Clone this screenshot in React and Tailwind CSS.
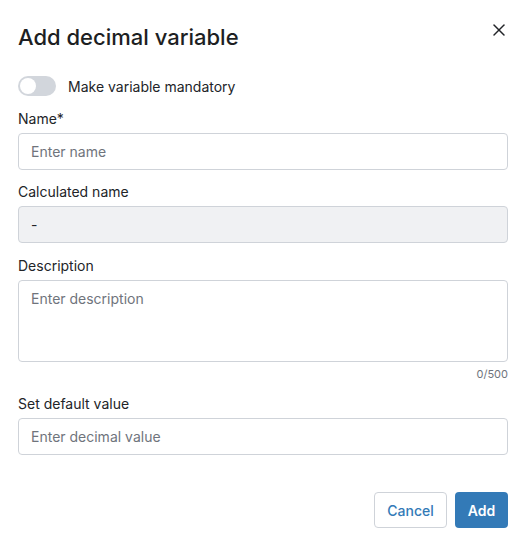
import { X } from 'lucide-react';

const Label = ({ children, className = '' }) => (
  <div className={`text-[14px] leading-[20px] text-[#222428] ${className}`}>{children}</div>
);

const inputBase =
  'w-full h-[37px] rounded-[4px] border border-[#cfd3d9] px-[12px] text-[14px] text-[#222428] placeholder:text-[#6f747c] outline-none';

export default function App() {
  return (
    <div
      className="w-[528px] h-[547px] bg-white pl-[18px] pr-[20px] pt-[23px]"
      style={{ fontFamily: 'Inter, "Noto Sans", sans-serif' }}
    >
      {/* Header */}
      <div className="flex items-start justify-between h-[28px]">
        <h2 className="text-[22px] leading-[28px] font-medium text-[#1d1f23]">Add decimal variable</h2>
        <button className="-mt-[3px] -mr-[1px] text-[#222428]">
          <X size={20} strokeWidth={1.8} />
        </button>
      </div>

      {/* Toggle */}
      <div className="mt-[25px] flex items-center h-[20px]">
        <div className="relative w-[38px] h-[20px] rounded-full bg-[#d2d6dc]">
          <div className="absolute left-[2px] top-[2px] w-[16px] h-[16px] rounded-full bg-white" />
        </div>
        <span className="ml-[12px] text-[14px] text-[#222428]">Make variable mandatory</span>
      </div>

      {/* Name */}
      <Label className="mt-[13px]">Name*</Label>
      <input className={`${inputBase} mt-[4px]`} placeholder="Enter name" />

      {/* Calculated name */}
      <Label className="mt-[12px]">Calculated name</Label>
      <div className="mt-[4px] w-full h-[37px] rounded-[4px] border border-[#cfd3d9] bg-[#f0f1f3] px-[12px] flex items-center text-[14px] text-[#222428]">
        -
      </div>

      {/* Description */}
      <Label className="mt-[13px]">Description</Label>
      <textarea
        className="mt-[4px] block w-full h-[82px] rounded-[4px] border border-[#cfd3d9] px-[12px] py-[8px] text-[14px] leading-[20px] text-[#222428] placeholder:text-[#6f747c] outline-none resize-none"
        placeholder="Enter description"
      />
      <div className="mt-[4px] text-right text-[11px] leading-[16px] text-[#6f747c]">0/500</div>

      {/* Default value */}
      <Label className="mt-[12px]">Set default value</Label>
      <input className={`${inputBase} mt-[4px]`} placeholder="Enter decimal value" />

      {/* Footer */}
      <div className="mt-[37px] flex justify-end gap-[8px]">
        <button className="h-[36px] w-[73px] rounded-[4px] border border-[#cfd3d9] bg-white text-[14px] font-medium text-[#337ab7]">
          Cancel
        </button>
        <button className="h-[36px] w-[53px] rounded-[4px] bg-[#337ab7] text-[14px] font-semibold text-white">
          Add
        </button>
      </div>
    </div>
  );
}
